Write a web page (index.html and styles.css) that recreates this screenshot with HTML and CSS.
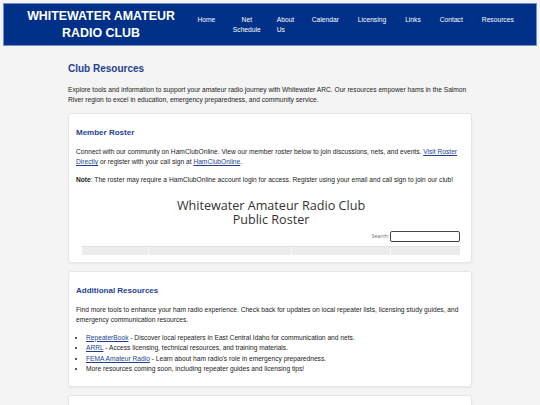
FILE: index.html
```html
<!DOCTYPE html>
<html lang="en">
<head>
<meta charset="utf-8">
<title>Club Resources - Whitewater Amateur Radio Club</title>
<link rel="stylesheet" href="styles.css">
</head>
<body>
<header class="site-header">
  <div class="site-title">WHITEWATER AMATEUR RADIO CLUB</div>
  <nav class="site-nav">
    <ul>
      <li><a href="#">Home</a></li>
      <li class="wrap wrap-center"><a href="#">Net<br>Schedule</a></li>
      <li class="wrap"><a href="#">About<br>Us</a></li>
      <li><a href="#">Calendar</a></li>
      <li><a href="#">Licensing</a></li>
      <li><a href="#">Links</a></li>
      <li><a href="#">Contact</a></li>
      <li><a href="#">Resources</a></li>
    </ul>
  </nav>
</header>

<main class="container">
  <h2 class="page-title">Club Resources</h2>
  <p class="intro">Explore tools and information to support your amateur radio journey with Whitewater ARC. Our resources empower hams in the Salmon River region to excel in education, emergency preparedness, and community service.</p>

  <section class="card">
    <h3>Member Roster</h3>
    <p>Connect with our community on HamClubOnline. View our member roster below to join discussions, nets, and events. <a href="#">Visit Roster Directly</a> or register with your call sign at <a href="#">HamClubOnline</a>.</p>
    <p><strong>Note</strong>: The roster may require a HamClubOnline account login for access. Register using your email and call sign to join our club!</p>
    <div class="embed">
      <div class="embed-title">Whitewater Amateur Radio Club<br>Public Roster</div>
      <div class="search-row">
        <label class="search-label">Search:</label>
        <span class="search-input"></span>
      </div>
      <div class="table-head">
        <div class="th th-1"><span>Call</span><span class="sort">&#8597;</span></div>
        <div class="th th-2"><span>Name</span><span class="sort">&#8597;</span></div>
        <div class="th th-3"><span>City</span><span class="sort"></span></div>
        <div class="th th-4"><span></span><span class="sort">&#8597;</span></div>
      </div>
    </div>
  </section>

  <section class="card">
    <h3>Additional Resources</h3>
    <p>Find more tools to enhance your ham radio experience. Check back for updates on local repeater lists, licensing study guides, and emergency communication resources.</p>
    <ul class="res-list">
      <li><a href="#">RepeaterBook</a> - Discover local repeaters in East Central Idaho for communication and nets.</li>
      <li><a href="#">ARRL</a> - Access licensing, technical resources, and training materials.</li>
      <li><a href="#">FEMA Amateur Radio</a> - Learn about ham radio's role in emergency preparedness.</li>
      <li>More resources coming soon, including repeater guides and licensing tips!</li>
    </ul>
  </section>

  <section class="card">
    <h3>Club Documents</h3>
    <p>Bylaws, meeting minutes, and other club documents will be posted here.</p>
  </section>
</main>
</body>
</html>
```

FILE: styles.css
```css
* { box-sizing: border-box; }

html, body {
  margin: 0;
  padding: 0;
}

body {
  background: #f4f4f4;
  font-family: "Liberation Sans", Arial, sans-serif;
  color: #222;
  font-size: 6.65px;
  line-height: 10.4px;
}

a { color: #1f3f8f; }

.site-header {
  margin: 3px 3px 0;
  height: 43px;
  background: #003087;
  border: 1px solid #6f8fd0;
  display: flex;
  align-items: center;
  padding-left: 10px;
}

.site-title {
  width: 174px;
  flex: none;
  color: #fff;
  font-weight: bold;
  font-size: 12.4px;
  line-height: 17px;
  text-align: center;
}

.site-nav ul {
  list-style: none;
  margin: 0;
  padding: 0;
  display: flex;
  align-items: flex-start;
}

.site-nav li {
  padding: 0 9.5px;
  font-size: 6.7px;
  line-height: 10px;
}

.site-nav li.wrap { padding: 0 8px; }
.site-nav li.wrap-center { text-align: center; }

.site-nav a {
  color: #fff;
  text-decoration: none;
}

.container {
  width: 404px;
  margin: 0 auto;
  padding-top: 17px;
}

.page-title {
  margin: 0 0 10px;
  font-size: 10px;
  line-height: 12px;
  color: #1f3f8f;
}

.intro {
  margin: 0 0 7px;
}

.card {
  background: #fff;
  border: 1px solid #e6e6e6;
  border-radius: 3px;
  box-shadow: 0 1px 2px rgba(0, 0, 0, 0.05);
  padding: 7px 7px 7px;
  margin-bottom: 8px;
}

.card h3 {
  margin: 7.3px 0 8.7px;
  font-size: 8px;
  line-height: 10px;
  color: #1f3f8f;
}

.card p {
  margin: 0 0 7.5px;
}

.card p:last-child { margin-bottom: 5px; }

.embed {
  height: 61.5px;
  overflow: hidden;
  padding: 6px 4px 0 6px;
  font-family: "Open Sans", "DejaVu Sans", sans-serif;
}

.embed-title {
  text-align: center;
  font-size: 12.6px;
  line-height: 14.3px;
  color: #333;
}

.search-row {
  display: flex;
  justify-content: flex-end;
  align-items: center;
  gap: 1px;
  margin-top: 3.5px;
}

.search-label {
  font-size: 5px;
  color: #666;
}

.search-input {
  width: 70px;
  height: 10.5px;
  border: 1px solid #444;
  border-radius: 2px;
  background: #fff;
}

.table-head {
  display: grid;
  grid-template-columns: 66px 143px 99px 1fr;
  margin-top: 4px;
  background: #ececec;
  border-top: 1px solid #e2e2e2;
  height: 12px;
}

.th {
  display: flex;
  justify-content: space-between;
  padding: 7px 4px 0 5px;
  font-size: 5px;
  font-weight: bold;
  color: #aaa;
  line-height: 6px;
  border-left: 1px solid #f7f7f7;
}

.th-1 { border-left: none; }

.sort { font-weight: normal; color: #aaa; }

.res-list {
  margin: 6px 0 5px;
  padding-left: 10px;
}

.res-list li { margin: 0; }
```
